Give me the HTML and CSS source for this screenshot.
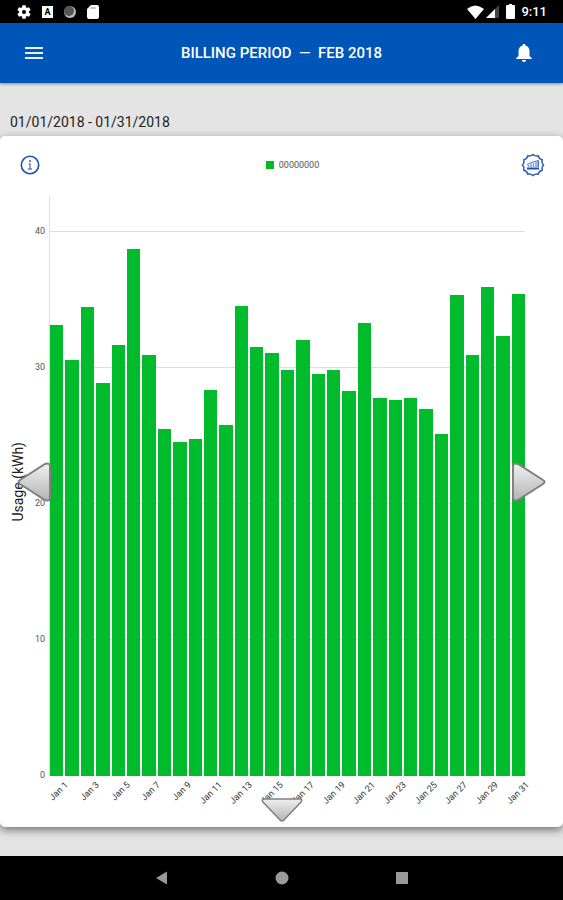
FILE: index.html
```html
<!DOCTYPE html>
<html lang="en">
<head>
    <meta charset="UTF-8">
    <meta name="viewport" content="width=device-width, initial-scale=1.0">
    <title>Billing Period</title>
    <link rel="stylesheet" href="styles.css">
</head>
<body>
    <div class="status-bar">
        <div class="status-left">
            <svg width="16" height="16" viewBox="0 0 24 24" fill="#fff"><path d="M19.4 13a7.500 7.500 0 0 0 0-2l2.200-1.700a.5.5 0 0 0 .1-.6l-2-3.500a.5.5 0 0 0-.6-.2l-2.500 1a7.300 7.300 0 0 0-1.700-1l-.4-2.600a.5.5 0 0 0-.5-.4h-4a.5.5 0 0 0-.5.4L9.100 5a7.300 7.300 0 0 0-1.700 1l-2.500-1a.5.5 0 0 0-.6.2l-2 3.500a.5.5 0 0 0 .1.600L4.600 11a7.500 7.500 0 0 0 0 2l-2.200 1.700a.5.5 0 0 0-.1.600l2 3.500c.1.200.4.300.6.200l2.500-1a7.300 7.300 0 0 0 1.700 1l.4 2.600c0 .200.200.400.5.400h4c.3 0 .5-.2.5-.4l.4-2.600a7.300 7.300 0 0 0 1.700-1l2.500 1c.2.100.5 0 .6-.2l2-3.500a.5.5 0 0 0-.1-.6zM12 15a3 3 0 1 1 0-6 3 3 0 0 1 0 6z"/></svg>
            <span class="keyboard">A</span>
            <svg width="14" height="14" viewBox="0 0 14 14"><circle cx="7" cy="7" r="6" fill="#bbb"/><circle cx="6" cy="6" r="5" fill="#555"/></svg>
            <svg width="14" height="16" viewBox="0 0 14 16"><path d="M5 1h6q2 0 2 2v10q0 2-2 2H3q-2 0-2-2V5z" fill="#fff"/><path d="M5 3v2M7 3v2M9 3v2" stroke="#999"/></svg>
        </div>
        <div class="status-right">
            <svg width="17" height="14" viewBox="0 0 17 14"><path d="M0 4Q8 -3 17 4L8.500 14z" fill="#fff"/></svg>
            <svg width="14" height="14" viewBox="0 0 14 14"><path d="M0 13L13 0v13z" fill="#444"/><path d="M0 13L9 4v9z" fill="#fff"/></svg>
            <svg class="battery" width="9" height="15" viewBox="0 0 9 15"><path d="M3 0h3v1h2q1 0 1 1v12q0 1-1 1H1q-1 0-1-1V2q0-1 1-1h2z" fill="#fff"/></svg>
            <span>9:11</span>
        </div>
    </div>

    <header class="app-bar">
        <button type="button" aria-label="Menu">
            <svg width="18" height="14" viewBox="0 0 18 14"><path d="M0 1h18v2H0zM0 6h18v2H0zM0 11h18v2H0z" fill="#e8f0ff"/></svg>
        </button>
        <h1>BILLING PERIOD &nbsp;—&nbsp; FEB 2018</h1>
        <button type="button" aria-label="Notifications">
            <svg width="16" height="18" viewBox="0 0 16 18"><path d="M8 0c1 0 1.500.6 1.500 1.600C12 2.300 13.500 4.400 13.500 7.200V12l2.300 2.300V15H.2v-.7L2.500 12V7.200C2.500 4.400 4 2.300 6.500 1.600 6.500.6 7 0 8 0zM6 16h4a2 2 0 0 1-4 0z" fill="#fff"/></svg>
        </button>
    </header>

    <main>
        <p class="dates">01/01/2018 - 01/31/2018</p>

        <section class="card">
            <div class="card-top">
                <button type="button" aria-label="Information">
                    <svg width="20" height="20" viewBox="0 0 20 20"><circle cx="10" cy="10" r="8.700" fill="none" stroke="#1b51b5" stroke-width="1.600"/><path d="M10 5v2" stroke="#6e7fc4" stroke-width="2"/><path d="M8.500 9H10v5M8 14h4" fill="none" stroke="#6e7fc4" stroke-width="1.500"/></svg>
                </button>
                <div class="legend"><span class="swatch"></span>00000000</div>
                <button type="button" aria-label="Usage level">
                    <svg width="24" height="24" viewBox="0 0 24 24"><path d="M12 1.500Q14 3.500 17.200 2.900 18 6 21.100 6.800 20.500 10 22.500 12 20.500 14 21.100 17.200 18 18 17.200 21.100 14 20.500 12 22.500 10 20.500 6.800 21.100 6 18 2.900 17.200 3.500 14 1.500 12 3.500 10 2.900 6.800 6 6 6.800 2.900 10 3.500 12 1.500z" fill="none" stroke="#2d62bb" stroke-width="1.600"/><path d="M6 15.500h12" stroke="#1b51b5" stroke-width="2"/><path d="M7.500 14v-2M10 14v-3M12.500 14v-4M15 14V9M17 14V8" stroke="#7f9dd6" stroke-width="1.500"/><path d="M6 11.500L12 9l5.500-1.500V14" fill="none" stroke="#4773c4"/></svg>
                </button>
            </div>

            <div class="chart">
                <div class="y-title">Usage (kWh)</div>
                <div class="plot" id="plot"></div>
                <div class="x-axis" id="xAxis"></div>
                <button type="button" class="arrow prev" aria-label="Previous period">
                    <svg width="36" height="42" viewBox="0 0 36 42"><path d="M4 19L29 3q5-2 5 3v30q0 5-5 3L4 23q-3-2 0-4z" fill="url(#grey)" stroke="#808080" stroke-width="2"/></svg>
                </button>
                <button type="button" class="arrow next" aria-label="Next period">
                    <svg width="36" height="42" viewBox="0 0 36 42"><path d="M32 19L7 3Q2 1 2 6v30q0 5 5 3l25-16q3-2 0-4z" fill="url(#grey)" stroke="#808080" stroke-width="2"/></svg>
                </button>
                <button type="button" class="arrow down" aria-label="More">
                    <svg width="42" height="26" viewBox="0 0 42 26"><path d="M3 2h36q3 0 1 3L23 23q-2 2-4 0L2 5Q0 2 3 2z" fill="url(#grey)" stroke="#808080" stroke-width="1.500"/></svg>
                </button>
            </div>
        </section>
    </main>

    <nav class="nav-bar">
        <button type="button" aria-label="Back"><svg width="14" height="14" viewBox="0 0 14 14"><path d="M1 7l11-6.500v13z" fill="#999"/></svg></button>
        <button type="button" aria-label="Home"><svg width="14" height="14" viewBox="0 0 14 14"><circle cx="7" cy="7" r="6.500" fill="#999"/></svg></button>
        <button type="button" aria-label="Recent"><svg width="14" height="14" viewBox="0 0 14 14"><path d="M1 1h12v12H1z" fill="#999"/></svg></button>
    </nav>

    <svg class="defs" width="0" height="0">
        <linearGradient id="grey" x1="0" y1="0" x2="0" y2="1">
            <stop offset="0" stop-color="#f0f0f0"/>
            <stop offset="1" stop-color="#b4b4b4"/>
        </linearGradient>
    </svg>

    <script src="chart.js"></script>
</body>
</html>
```
FILE: styles.css
```css
* {
    box-sizing: border-box;
}

body {
    margin: 0;
    min-height: 100vh;
    display: flex;
    flex-direction: column;
    background-color: #e4e4e4;
    font-family: Roboto, Arial, sans-serif;
    color: #222;
}

button {
    display: flex;
    padding: 0;
    border: none;
    background: none;
    cursor: pointer;
}

/* Android status bar */
.status-bar {
    display: flex;
    justify-content: space-between;
    align-items: center;
    height: 23px;
    padding: 0 16px;
    background-color: #000;
    color: #fff;
    font-size: 13px;
    font-weight: 500;
}

.status-left,
.status-right {
    display: flex;
    align-items: center;
}

.status-left {
    gap: 9px;
}

.status-right {
    gap: 2px;
}

.battery {
    margin: 0 4px;
}

.keyboard {
    width: 11px;
    margin: 0 1px;
    background-color: #fff;
    color: #000;
    font-size: 9px;
    line-height: 12px;
    font-weight: bold;
    text-align: center;
}

.app-bar {
    display: flex;
    justify-content: space-between;
    align-items: center;
    height: 60px;
    padding: 0 31px 0 25px;
    background-color: #0056b8;
    box-shadow: 0 1px 3px rgba(0, 0, 0, 0.4);
}

.app-bar h1 {
    margin: 0 0 0 4px;
    color: #fff;
    font-size: 15px;
    font-weight: 500;
}

main {
    flex: 1;
    display: flex;
    flex-direction: column;
    padding-bottom: 29px;
}

.dates {
    margin: 0;
    padding: 30px 10px 5px;
    font-size: 14px;
    line-height: 18px;
}

.card {
    flex: 1;
    display: flex;
    flex-direction: column;
    border-radius: 5px;
    background-color: #fff;
    box-shadow: 0 3px 8px rgba(0, 0, 0, 0.5);
}

.card-top {
    display: flex;
    justify-content: space-between;
    align-items: center;
    padding: 17px 18px 0 20px;
}

.legend {
    display: flex;
    align-items: center;
    gap: 5px;
    margin-left: 24px;
    font-size: 9px;
    color: #555;
}

.swatch {
    width: 8px;
    height: 8px;
    background-color: #00bc20;
}

/* Chart */
.chart {
    position: relative;
    flex: 1;
    display: grid;
    grid-template-columns: 49px 1fr;
    grid-template-rows: 1fr 51px;
    padding: 20px 38px 0 0;
}

.y-title {
    align-self: center;
    justify-self: start;
    margin: 0 0 10px 10px;
    writing-mode: vertical-rl;
    transform: rotate(180deg);
    font-size: 14px;
    line-height: 16px;
}

.plot {
    position: relative;
    display: flex;
    align-items: flex-end;
    gap: 2px;
    border-left: 1px solid #ddd;
}

.grid-line {
    position: absolute;
    left: 0;
    right: 0;
    height: 1px;
    background-color: #ddd;
}

.grid-line span {
    position: absolute;
    right: 100%;
    top: -6px;
    padding-right: 5px;
    color: #555;
    font-size: 9px;
    line-height: 12px;
}

.bar {
    position: relative;
    flex: 1;
    background-color: #00bc2c;
}

.x-axis {
    grid-column: 2;
    display: grid;
    grid-template-columns: repeat(31, minmax(0, 1fr));
    column-gap: 2px;
    padding: 3px 2px 0 0;
}

.x-axis span {
    justify-self: end;
    height: 12px;
    font-size: 9px;
    line-height: 12px;
    color: #333;
    white-space: nowrap;
    transform: rotate(-45deg);
    transform-origin: top right;
}

/* Arrows lie over the chart */
.arrow {
    position: absolute;
}

.prev {
    left: 16px;
    top: 284px;
}

.next {
    right: 16px;
    top: 284px;
}

.down {
    left: 50%;
    bottom: 4px;
    margin-left: -21px;
}

.nav-bar {
    display: flex;
    justify-content: center;
    align-items: center;
    gap: 106px;
    height: 44px;
    background-color: #000;
}

.defs {
    position: absolute;
}
```
FILE: chart.js
```js
var usage = [
    33.2, 30.6, 34.5, 28.9, 31.7, 38.8, 31.0, 25.5, 24.6, 24.8, 28.4,
    25.8, 34.6, 31.6, 31.1, 29.9, 32.1, 29.6, 29.9, 28.3, 33.3, 27.8,
    27.7, 27.8, 27.0, 25.2, 35.4, 31.0, 36.0, 32.4, 35.5
];
var maxUsage = 42.6;

var plot = document.getElementById('plot');
var xAxis = document.getElementById('xAxis');

for (var tick = 0; tick <= 40; tick += 10) {
    var line = document.createElement('div');
    line.className = 'grid-line';
    line.style.bottom = (tick / maxUsage * 100) + '%';
    line.innerHTML = '<span>' + tick + '</span>';
    plot.appendChild(line);
}

usage.forEach(function (value, i) {
    var bar = document.createElement('div');
    bar.className = 'bar';
    bar.style.height = (value / maxUsage * 100) + '%';
    plot.appendChild(bar);

    // Only every second day gets a label
    var label = document.createElement('span');
    label.textContent = i % 2 === 0 ? 'Jan ' + (i + 1) : '';
    xAxis.appendChild(label);
});
```
